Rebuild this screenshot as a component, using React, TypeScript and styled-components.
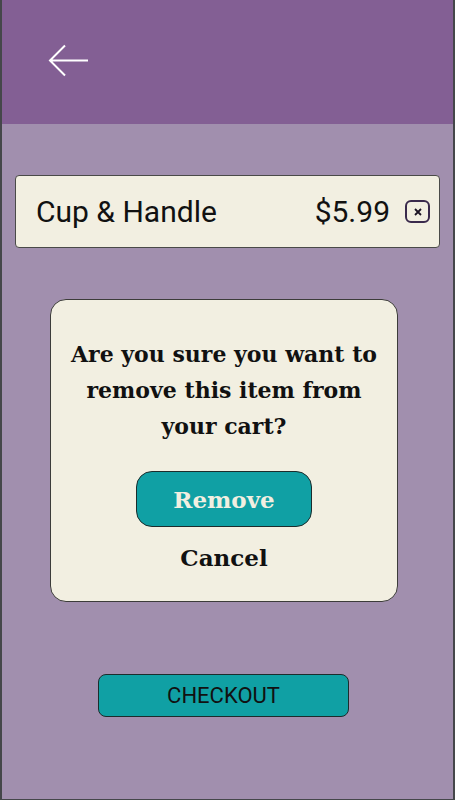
import React from 'react';
import styled, { createGlobalStyle } from 'styled-components';

const GlobalStyle = createGlobalStyle`
  html, body {
    margin: 0;
    padding: 0;
    background: #45474a;
  }
  * {
    box-sizing: border-box;
  }
`;

const App: React.FC = () => {
  return (
    <>
      <GlobalStyle />
      <Frame>
        <Screen>
          <Header>
            <BackButton aria-label='Back'>
              <svg width='42' height='34' viewBox='0 0 42 34' fill='none'>
                <path
                  d='M40 16.5H2M17 1.5L2 16.5L17 31.5'
                  stroke='#ffffff'
                  strokeWidth='2'
                />
              </svg>
            </BackButton>
          </Header>
          <Body>
            <CartItem>
              <ItemName>Cup &amp; Handle</ItemName>
              <ItemRight>
                <ItemPrice>$5.99</ItemPrice>
                <RemoveIcon aria-label='Remove item'>
                  <svg width='10' height='10' viewBox='0 0 10 10'>
                    <path
                      d='M2 2L8 8M8 2L2 8'
                      stroke='#1c1424'
                      strokeWidth='1.8'
                    />
                  </svg>
                </RemoveIcon>
              </ItemRight>
            </CartItem>
            <Dialog>
              <DialogText>
                Are you sure you want to remove this item from your cart?
              </DialogText>
              <RemoveButton>Remove</RemoveButton>
              <CancelButton>Cancel</CancelButton>
            </Dialog>
            <CheckoutButton>CHECKOUT</CheckoutButton>
          </Body>
        </Screen>
      </Frame>
    </>
  );
};

const Frame = styled.div`
  width: 455px;
  height: 800px;
  padding: 0 2px 1px 2px;
  background: #45474a;
`;

const Screen = styled.div`
  display: flex;
  flex-direction: column;
  width: 100%;
  height: 100%;
  background: #a18fae;
`;

const Header = styled.header`
  display: flex;
  align-items: center;
  height: 124px;
  padding: 0 0 2px 46px;
  background: #835f94;
`;

const BackButton = styled.button`
  display: flex;
  padding: 0;
  border: none;
  background: none;
  cursor: pointer;
`;

const Body = styled.main`
  display: flex;
  flex-direction: column;
  align-items: flex-start;
  padding: 51px 13px 0;
`;

const CartItem = styled.div`
  display: flex;
  align-items: center;
  justify-content: space-between;
  width: 100%;
  height: 73px;
  padding: 0 9px 0 20px;
  background: #f2efe1;
  border: 1px solid #4a4a48;
  border-radius: 4px;
`;

const ItemName = styled.span`
  font-family: Roboto, 'Noto Sans', sans-serif;
  font-size: 30px;
  color: #111111;
`;

const ItemRight = styled.div`
  display: flex;
  align-items: center;
  gap: 15px;
`;

const ItemPrice = styled.span`
  font-family: Roboto, 'Noto Sans', sans-serif;
  font-size: 30px;
  color: #111111;
`;

const RemoveIcon = styled.button`
  display: flex;
  align-items: center;
  justify-content: center;
  width: 25px;
  height: 23px;
  padding: 0;
  background: transparent;
  border: 2px solid #3a2a4c;
  border-radius: 6px;
  cursor: pointer;
`;

const Dialog = styled.section`
  display: flex;
  flex-direction: column;
  align-items: center;
  width: 348px;
  height: 303px;
  margin: 51px 0 0 35px;
  padding: 36px 6px 0;
  background: #f2efe1;
  border: 1px solid #3c3c3a;
  border-radius: 16px;
`;

const DialogText = styled.p`
  margin: 0;
  font-family: 'DejaVu Serif', 'Liberation Serif', serif;
  font-weight: bold;
  font-size: 22px;
  line-height: 36px;
  text-align: center;
  color: #111111;
`;

const RemoveButton = styled.button`
  width: 176px;
  height: 56px;
  margin-top: 27px;
  background: #10a0a4;
  border: 1px solid #1c2c2c;
  border-radius: 16px;
  font-family: 'DejaVu Serif', 'Liberation Serif', serif;
  font-weight: bold;
  font-size: 23px;
  color: #f2efe1;
  cursor: pointer;
`;

const CancelButton = styled.button`
  margin-top: 17px;
  padding: 0;
  background: none;
  border: none;
  font-family: 'DejaVu Serif', 'Liberation Serif', serif;
  font-weight: bold;
  font-size: 23px;
  color: #111111;
  cursor: pointer;
`;

const CheckoutButton = styled.button`
  width: 251px;
  height: 43px;
  margin: 72px 0 0 83px;
  background: #10a0a4;
  border: 1px solid #1c2c2c;
  border-radius: 8px;
  font-family: Roboto, 'Noto Sans', sans-serif;
  font-size: 22px;
  color: #111111;
  cursor: pointer;
`;

export default App;
